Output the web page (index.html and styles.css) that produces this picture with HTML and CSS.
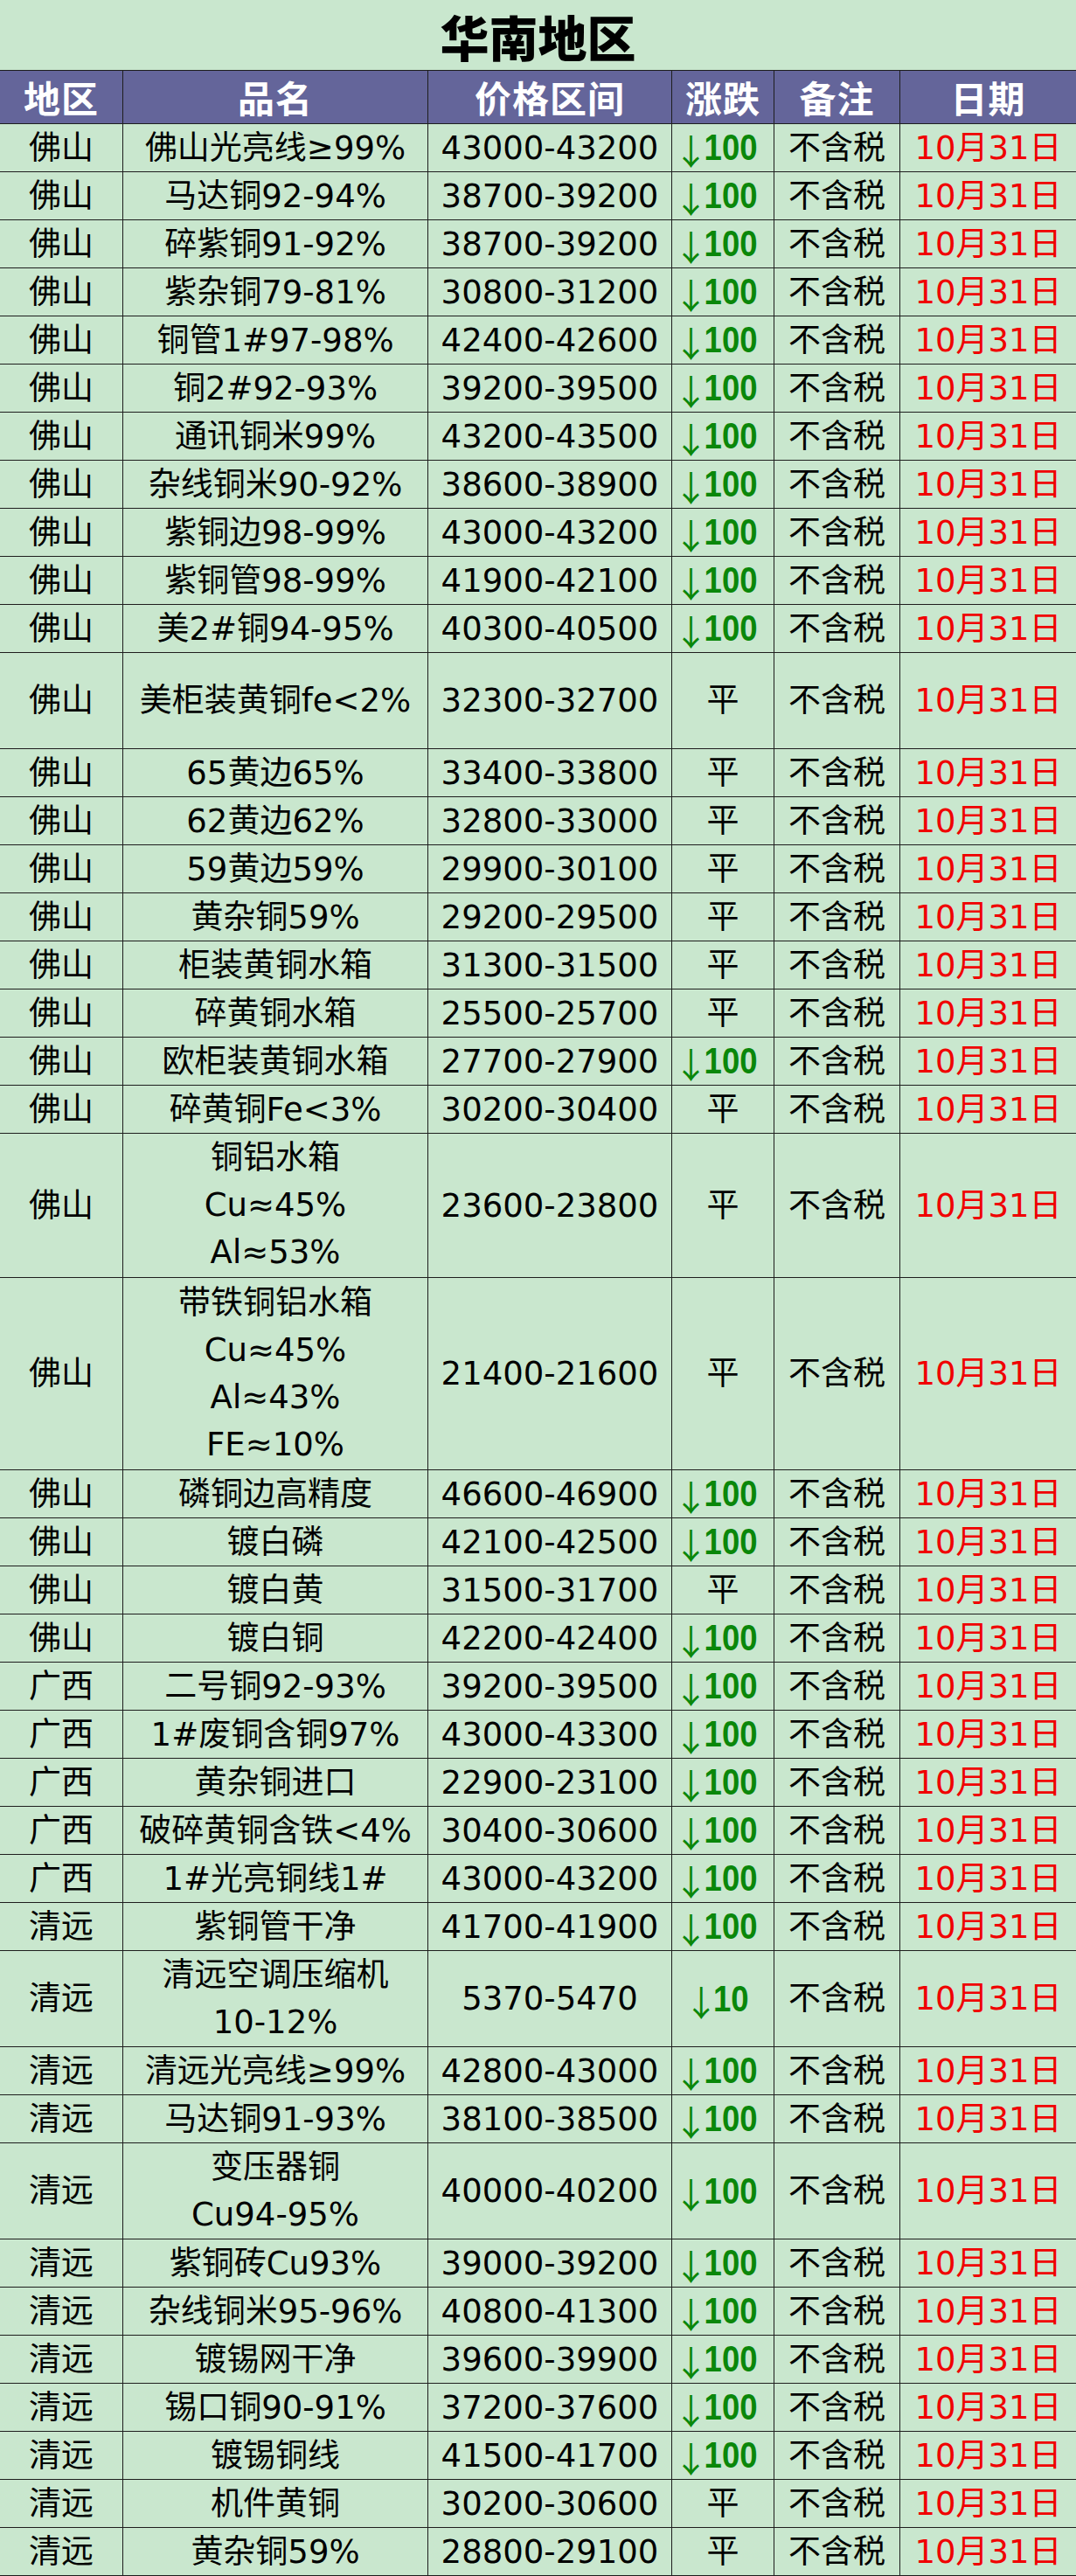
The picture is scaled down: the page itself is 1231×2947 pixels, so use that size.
FILE: index.html
```html
<!DOCTYPE html>
<html lang="zh-CN">
<head>
<meta charset="utf-8">
<title>华南地区</title>
<link rel="stylesheet" href="styles.css">
</head>
<body>
<div class="sheet">
  <div class="title">华南地区</div>
  <div class="row head">
    <div class="c">地区</div><div class="c">品名</div><div class="c">价格区间</div><div class="c">涨跌</div><div class="c">备注</div><div class="c">日期</div>
  </div>

  <div class="row"><div class="c">佛山</div><div class="c">佛山光亮线≥99%</div><div class="c">43000-43200</div><div class="c chg"><span class="arr">↓</span><span class="num">100</span></div><div class="c">不含税</div><div class="c date">10月31日</div></div>
  <div class="row"><div class="c">佛山</div><div class="c">马达铜92-94%</div><div class="c">38700-39200</div><div class="c chg"><span class="arr">↓</span><span class="num">100</span></div><div class="c">不含税</div><div class="c date">10月31日</div></div>
  <div class="row"><div class="c">佛山</div><div class="c">碎紫铜91-92%</div><div class="c">38700-39200</div><div class="c chg"><span class="arr">↓</span><span class="num">100</span></div><div class="c">不含税</div><div class="c date">10月31日</div></div>
  <div class="row"><div class="c">佛山</div><div class="c">紫杂铜79-81%</div><div class="c">30800-31200</div><div class="c chg"><span class="arr">↓</span><span class="num">100</span></div><div class="c">不含税</div><div class="c date">10月31日</div></div>
  <div class="row"><div class="c">佛山</div><div class="c">铜管1#97-98%</div><div class="c">42400-42600</div><div class="c chg"><span class="arr">↓</span><span class="num">100</span></div><div class="c">不含税</div><div class="c date">10月31日</div></div>
  <div class="row"><div class="c">佛山</div><div class="c">铜2#92-93%</div><div class="c">39200-39500</div><div class="c chg"><span class="arr">↓</span><span class="num">100</span></div><div class="c">不含税</div><div class="c date">10月31日</div></div>
  <div class="row"><div class="c">佛山</div><div class="c">通讯铜米99%</div><div class="c">43200-43500</div><div class="c chg"><span class="arr">↓</span><span class="num">100</span></div><div class="c">不含税</div><div class="c date">10月31日</div></div>
  <div class="row"><div class="c">佛山</div><div class="c">杂线铜米90-92%</div><div class="c">38600-38900</div><div class="c chg"><span class="arr">↓</span><span class="num">100</span></div><div class="c">不含税</div><div class="c date">10月31日</div></div>
  <div class="row"><div class="c">佛山</div><div class="c">紫铜边98-99%</div><div class="c">43000-43200</div><div class="c chg"><span class="arr">↓</span><span class="num">100</span></div><div class="c">不含税</div><div class="c date">10月31日</div></div>
  <div class="row"><div class="c">佛山</div><div class="c">紫铜管98-99%</div><div class="c">41900-42100</div><div class="c chg"><span class="arr">↓</span><span class="num">100</span></div><div class="c">不含税</div><div class="c date">10月31日</div></div>
  <div class="row"><div class="c">佛山</div><div class="c">美2#铜94-95%</div><div class="c">40300-40500</div><div class="c chg"><span class="arr">↓</span><span class="num">100</span></div><div class="c">不含税</div><div class="c date">10月31日</div></div>
  <div class="row r2"><div class="c">佛山</div><div class="c">美柜装黄铜fe&lt;2%</div><div class="c">32300-32700</div><div class="c">平</div><div class="c">不含税</div><div class="c date">10月31日</div></div>
  <div class="row"><div class="c">佛山</div><div class="c">65黄边65%</div><div class="c">33400-33800</div><div class="c">平</div><div class="c">不含税</div><div class="c date">10月31日</div></div>
  <div class="row"><div class="c">佛山</div><div class="c">62黄边62%</div><div class="c">32800-33000</div><div class="c">平</div><div class="c">不含税</div><div class="c date">10月31日</div></div>
  <div class="row"><div class="c">佛山</div><div class="c">59黄边59%</div><div class="c">29900-30100</div><div class="c">平</div><div class="c">不含税</div><div class="c date">10月31日</div></div>
  <div class="row"><div class="c">佛山</div><div class="c">黄杂铜59%</div><div class="c">29200-29500</div><div class="c">平</div><div class="c">不含税</div><div class="c date">10月31日</div></div>
  <div class="row"><div class="c">佛山</div><div class="c">柜装黄铜水箱</div><div class="c">31300-31500</div><div class="c">平</div><div class="c">不含税</div><div class="c date">10月31日</div></div>
  <div class="row"><div class="c">佛山</div><div class="c">碎黄铜水箱</div><div class="c">25500-25700</div><div class="c">平</div><div class="c">不含税</div><div class="c date">10月31日</div></div>
  <div class="row"><div class="c">佛山</div><div class="c">欧柜装黄铜水箱</div><div class="c">27700-27900</div><div class="c chg"><span class="arr">↓</span><span class="num">100</span></div><div class="c">不含税</div><div class="c date">10月31日</div></div>
  <div class="row"><div class="c">佛山</div><div class="c">碎黄铜Fe&lt;3%</div><div class="c">30200-30400</div><div class="c">平</div><div class="c">不含税</div><div class="c date">10月31日</div></div>
  <div class="row r3"><div class="c">佛山</div><div class="c multi">铜铝水箱<br>Cu≈45%<br>Al≈53%</div><div class="c">23600-23800</div><div class="c">平</div><div class="c">不含税</div><div class="c date">10月31日</div></div>
  <div class="row r4"><div class="c">佛山</div><div class="c multi">带铁铜铝水箱<br>Cu≈45%<br>Al≈43%<br>FE≈10%</div><div class="c">21400-21600</div><div class="c">平</div><div class="c">不含税</div><div class="c date">10月31日</div></div>
  <div class="row"><div class="c">佛山</div><div class="c">磷铜边高精度</div><div class="c">46600-46900</div><div class="c chg"><span class="arr">↓</span><span class="num">100</span></div><div class="c">不含税</div><div class="c date">10月31日</div></div>
  <div class="row"><div class="c">佛山</div><div class="c">镀白磷</div><div class="c">42100-42500</div><div class="c chg"><span class="arr">↓</span><span class="num">100</span></div><div class="c">不含税</div><div class="c date">10月31日</div></div>
  <div class="row"><div class="c">佛山</div><div class="c">镀白黄</div><div class="c">31500-31700</div><div class="c">平</div><div class="c">不含税</div><div class="c date">10月31日</div></div>
  <div class="row"><div class="c">佛山</div><div class="c">镀白铜</div><div class="c">42200-42400</div><div class="c chg"><span class="arr">↓</span><span class="num">100</span></div><div class="c">不含税</div><div class="c date">10月31日</div></div>
  <div class="row"><div class="c">广西</div><div class="c">二号铜92-93%</div><div class="c">39200-39500</div><div class="c chg"><span class="arr">↓</span><span class="num">100</span></div><div class="c">不含税</div><div class="c date">10月31日</div></div>
  <div class="row"><div class="c">广西</div><div class="c">1#废铜含铜97%</div><div class="c">43000-43300</div><div class="c chg"><span class="arr">↓</span><span class="num">100</span></div><div class="c">不含税</div><div class="c date">10月31日</div></div>
  <div class="row"><div class="c">广西</div><div class="c">黄杂铜进口</div><div class="c">22900-23100</div><div class="c chg"><span class="arr">↓</span><span class="num">100</span></div><div class="c">不含税</div><div class="c date">10月31日</div></div>
  <div class="row"><div class="c">广西</div><div class="c">破碎黄铜含铁&lt;4%</div><div class="c">30400-30600</div><div class="c chg"><span class="arr">↓</span><span class="num">100</span></div><div class="c">不含税</div><div class="c date">10月31日</div></div>
  <div class="row"><div class="c">广西</div><div class="c">1#光亮铜线1#</div><div class="c">43000-43200</div><div class="c chg"><span class="arr">↓</span><span class="num">100</span></div><div class="c">不含税</div><div class="c date">10月31日</div></div>
  <div class="row"><div class="c">清远</div><div class="c">紫铜管干净</div><div class="c">41700-41900</div><div class="c chg"><span class="arr">↓</span><span class="num">100</span></div><div class="c">不含税</div><div class="c date">10月31日</div></div>
  <div class="row r2"><div class="c">清远</div><div class="c multi">清远空调压缩机<br>10-12%</div><div class="c">5370-5470</div><div class="c chg"><span class="arr">↓</span><span class="num">10</span></div><div class="c">不含税</div><div class="c date">10月31日</div></div>
  <div class="row"><div class="c">清远</div><div class="c">清远光亮线≥99%</div><div class="c">42800-43000</div><div class="c chg"><span class="arr">↓</span><span class="num">100</span></div><div class="c">不含税</div><div class="c date">10月31日</div></div>
  <div class="row"><div class="c">清远</div><div class="c">马达铜91-93%</div><div class="c">38100-38500</div><div class="c chg"><span class="arr">↓</span><span class="num">100</span></div><div class="c">不含税</div><div class="c date">10月31日</div></div>
  <div class="row r2"><div class="c">清远</div><div class="c multi">变压器铜<br>Cu94-95%</div><div class="c">40000-40200</div><div class="c chg"><span class="arr">↓</span><span class="num">100</span></div><div class="c">不含税</div><div class="c date">10月31日</div></div>
  <div class="row"><div class="c">清远</div><div class="c">紫铜砖Cu93%</div><div class="c">39000-39200</div><div class="c chg"><span class="arr">↓</span><span class="num">100</span></div><div class="c">不含税</div><div class="c date">10月31日</div></div>
  <div class="row"><div class="c">清远</div><div class="c">杂线铜米95-96%</div><div class="c">40800-41300</div><div class="c chg"><span class="arr">↓</span><span class="num">100</span></div><div class="c">不含税</div><div class="c date">10月31日</div></div>
  <div class="row"><div class="c">清远</div><div class="c">镀锡网干净</div><div class="c">39600-39900</div><div class="c chg"><span class="arr">↓</span><span class="num">100</span></div><div class="c">不含税</div><div class="c date">10月31日</div></div>
  <div class="row"><div class="c">清远</div><div class="c">锡口铜90-91%</div><div class="c">37200-37600</div><div class="c chg"><span class="arr">↓</span><span class="num">100</span></div><div class="c">不含税</div><div class="c date">10月31日</div></div>
  <div class="row"><div class="c">清远</div><div class="c">镀锡铜线</div><div class="c">41500-41700</div><div class="c chg"><span class="arr">↓</span><span class="num">100</span></div><div class="c">不含税</div><div class="c date">10月31日</div></div>
  <div class="row"><div class="c">清远</div><div class="c">机件黄铜</div><div class="c">30200-30600</div><div class="c">平</div><div class="c">不含税</div><div class="c date">10月31日</div></div>
  <div class="row"><div class="c">清远</div><div class="c">黄杂铜59%</div><div class="c">28800-29100</div><div class="c">平</div><div class="c">不含税</div><div class="c date">10月31日</div></div>
</div>
</body>
</html>
```
FILE: styles.css
```css
html, body {
  margin: 0;
  padding: 0;
  background: #c9e7ce;
}
.sheet {
  width: 1231px;
  background: #c9e7ce;
  font-family: "DejaVu Sans", "Noto Sans CJK SC", sans-serif;
  font-size: 37px;
  color: #000;
}
.title {
  box-sizing: border-box;
  height: 81px;
  border-bottom: 1px solid #1e1e1e;
  display: flex;
  align-items: center;
  justify-content: center;
  font-family: "Noto Sans CJK SC", sans-serif;
  font-weight: 900;
  font-size: 56px;
  line-height: 1;
  padding-top: 2px;
}
.row {
  box-sizing: border-box;
  display: grid;
  grid-template-columns: 141px 349px 279px 117px 144px 1fr;
  height: 55px;
  border-bottom: 1px solid #1e1e1e;
}
.row.r2 { height: 110px; }
.row.r3 { height: 165px; }
.row.r4 { height: 220px; }
.c {
  box-sizing: border-box;
  border-right: 1px solid #1e1e1e;
  display: flex;
  align-items: center;
  justify-content: center;
  text-align: center;
  white-space: nowrap;
  line-height: 1;
  overflow: visible;
}
.c:last-child { border-right: none; }
.multi { line-height: 54px; }
.head {
  height: 61px;
  background: #64659a;
  color: #fff;
}
.head .c {
  font-family: "Noto Sans CJK SC", sans-serif;
  font-weight: 700;
  font-size: 42px;
  letter-spacing: 1px;
}
.date { color: #f00000; }
.chg {
  color: #0a870a;
  padding-right: 12px;
}
.chg .arr {
  font-family: "Noto Sans CJK SC", sans-serif;
  font-size: 40px;
  font-weight: 400;
  letter-spacing: -9px;
  position: relative;
  top: 2px;
}
.chg .num {
  display: inline-block;
  font-family: "Liberation Sans", sans-serif;
  font-weight: 700;
  font-size: 42px;
  transform: scaleX(0.87);
}
```
